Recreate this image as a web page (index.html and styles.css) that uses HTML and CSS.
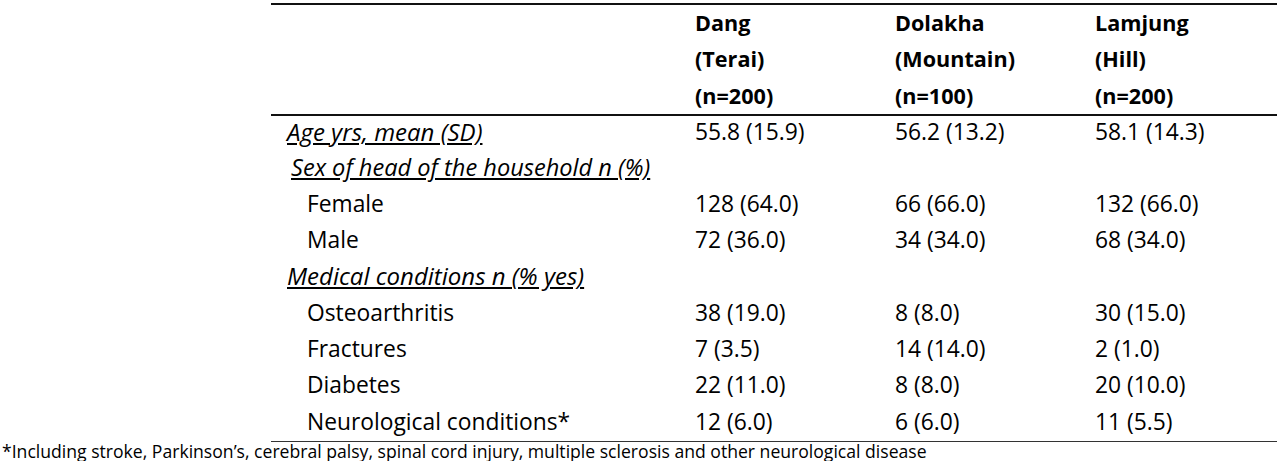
FILE: index.html
```html
<!DOCTYPE html>
<html lang="en">
<head>
<meta charset="utf-8">
<title>Table</title>
<link rel="stylesheet" href="styles.css">
</head>
<body>
<div class="page">
  <table class="data">
    <colgroup>
      <col class="c-label">
      <col class="c-val">
      <col class="c-val">
      <col class="c-last">
    </colgroup>
    <thead>
      <tr>
        <th class="blank"></th>
        <th>Dang<br>(Terai)<br>(n=200)</th>
        <th>Dolakha<br>(Mountain)<br>(n=100)</th>
        <th>Lamjung<br>(Hill)<br>(n=200)</th>
      </tr>
    </thead>
    <tbody>
      <tr><td class="sec"><span class="u">Age yrs, mean (SD)</span></td><td>55.8 (15.9)</td><td>56.2 (13.2)</td><td>58.1 (14.3)</td></tr>
      <tr><td class="sec sec2"><span class="u">Sex of head of the household n (%)</span></td><td></td><td></td><td></td></tr>
      <tr><td class="item">Female</td><td>128 (64.0)</td><td>66 (66.0)</td><td>132 (66.0)</td></tr>
      <tr><td class="item">Male</td><td>72 (36.0)</td><td>34 (34.0)</td><td>68 (34.0)</td></tr>
      <tr><td class="sec"><span class="u">Medical conditions n (% yes)</span></td><td></td><td></td><td></td></tr>
      <tr><td class="item">Osteoarthritis</td><td>38 (19.0)</td><td>8 (8.0)</td><td>30 (15.0)</td></tr>
      <tr><td class="item">Fractures</td><td>7 (3.5)</td><td>14 (14.0)</td><td>2 (1.0)</td></tr>
      <tr><td class="item">Diabetes</td><td>22 (11.0)</td><td>8 (8.0)</td><td>20 (10.0)</td></tr>
      <tr><td class="item">Neurological conditions*</td><td>12 (6.0)</td><td>6 (6.0)</td><td>11 (5.5)</td></tr>
    </tbody>
  </table>
  <p class="note">*Including stroke, Parkinson’s, cerebral palsy, spinal cord injury, multiple sclerosis and other neurological disease</p>
</div>
</body>
</html>
```
FILE: styles.css
```css
html, body {
  margin: 0;
  padding: 0;
  background: #ffffff;
}

body {
  font-family: "Open Sans", "Liberation Sans", sans-serif;
  color: #000000;
}

.page {
  padding-top: 3px;
}

.data {
  margin-left: 271px;
  width: 1006px;
  border-collapse: collapse;
  table-layout: fixed;
  font-size: 22.8px;
}

.c-label { width: 424px; }
.c-val { width: 200px; }
.c-last { width: 182px; }

.data thead tr {
  border-top: 2px solid #111111;
  border-bottom: 2px solid #111111;
}

.data th {
  text-align: left;
  font-weight: 700;
  font-size: 21.6px;
  line-height: 36.33px;
  padding: 0;
  vertical-align: top;
}

.data td {
  height: 36.33px;
  line-height: 26px;
  padding: 0 0 4px 0;
  vertical-align: middle;
  box-sizing: border-box;
  white-space: nowrap;
}

.data tbody tr:last-child {
  border-bottom: 1px solid #333333;
}

.sec {
  padding-left: 16px !important;
  font-style: italic;
  font-size: 24px;
}

.sec2 {
  padding-left: 20px !important;
  font-size: 23.6px;
}

.u {
  text-decoration: underline;
  text-underline-offset: 2px;
}

.item {
  padding-left: 36px !important;
}

.note {
  margin: 0;
  padding-left: 2px;
  font-size: 17.6px;
  line-height: 19px;
  color: #000000;
}
```
